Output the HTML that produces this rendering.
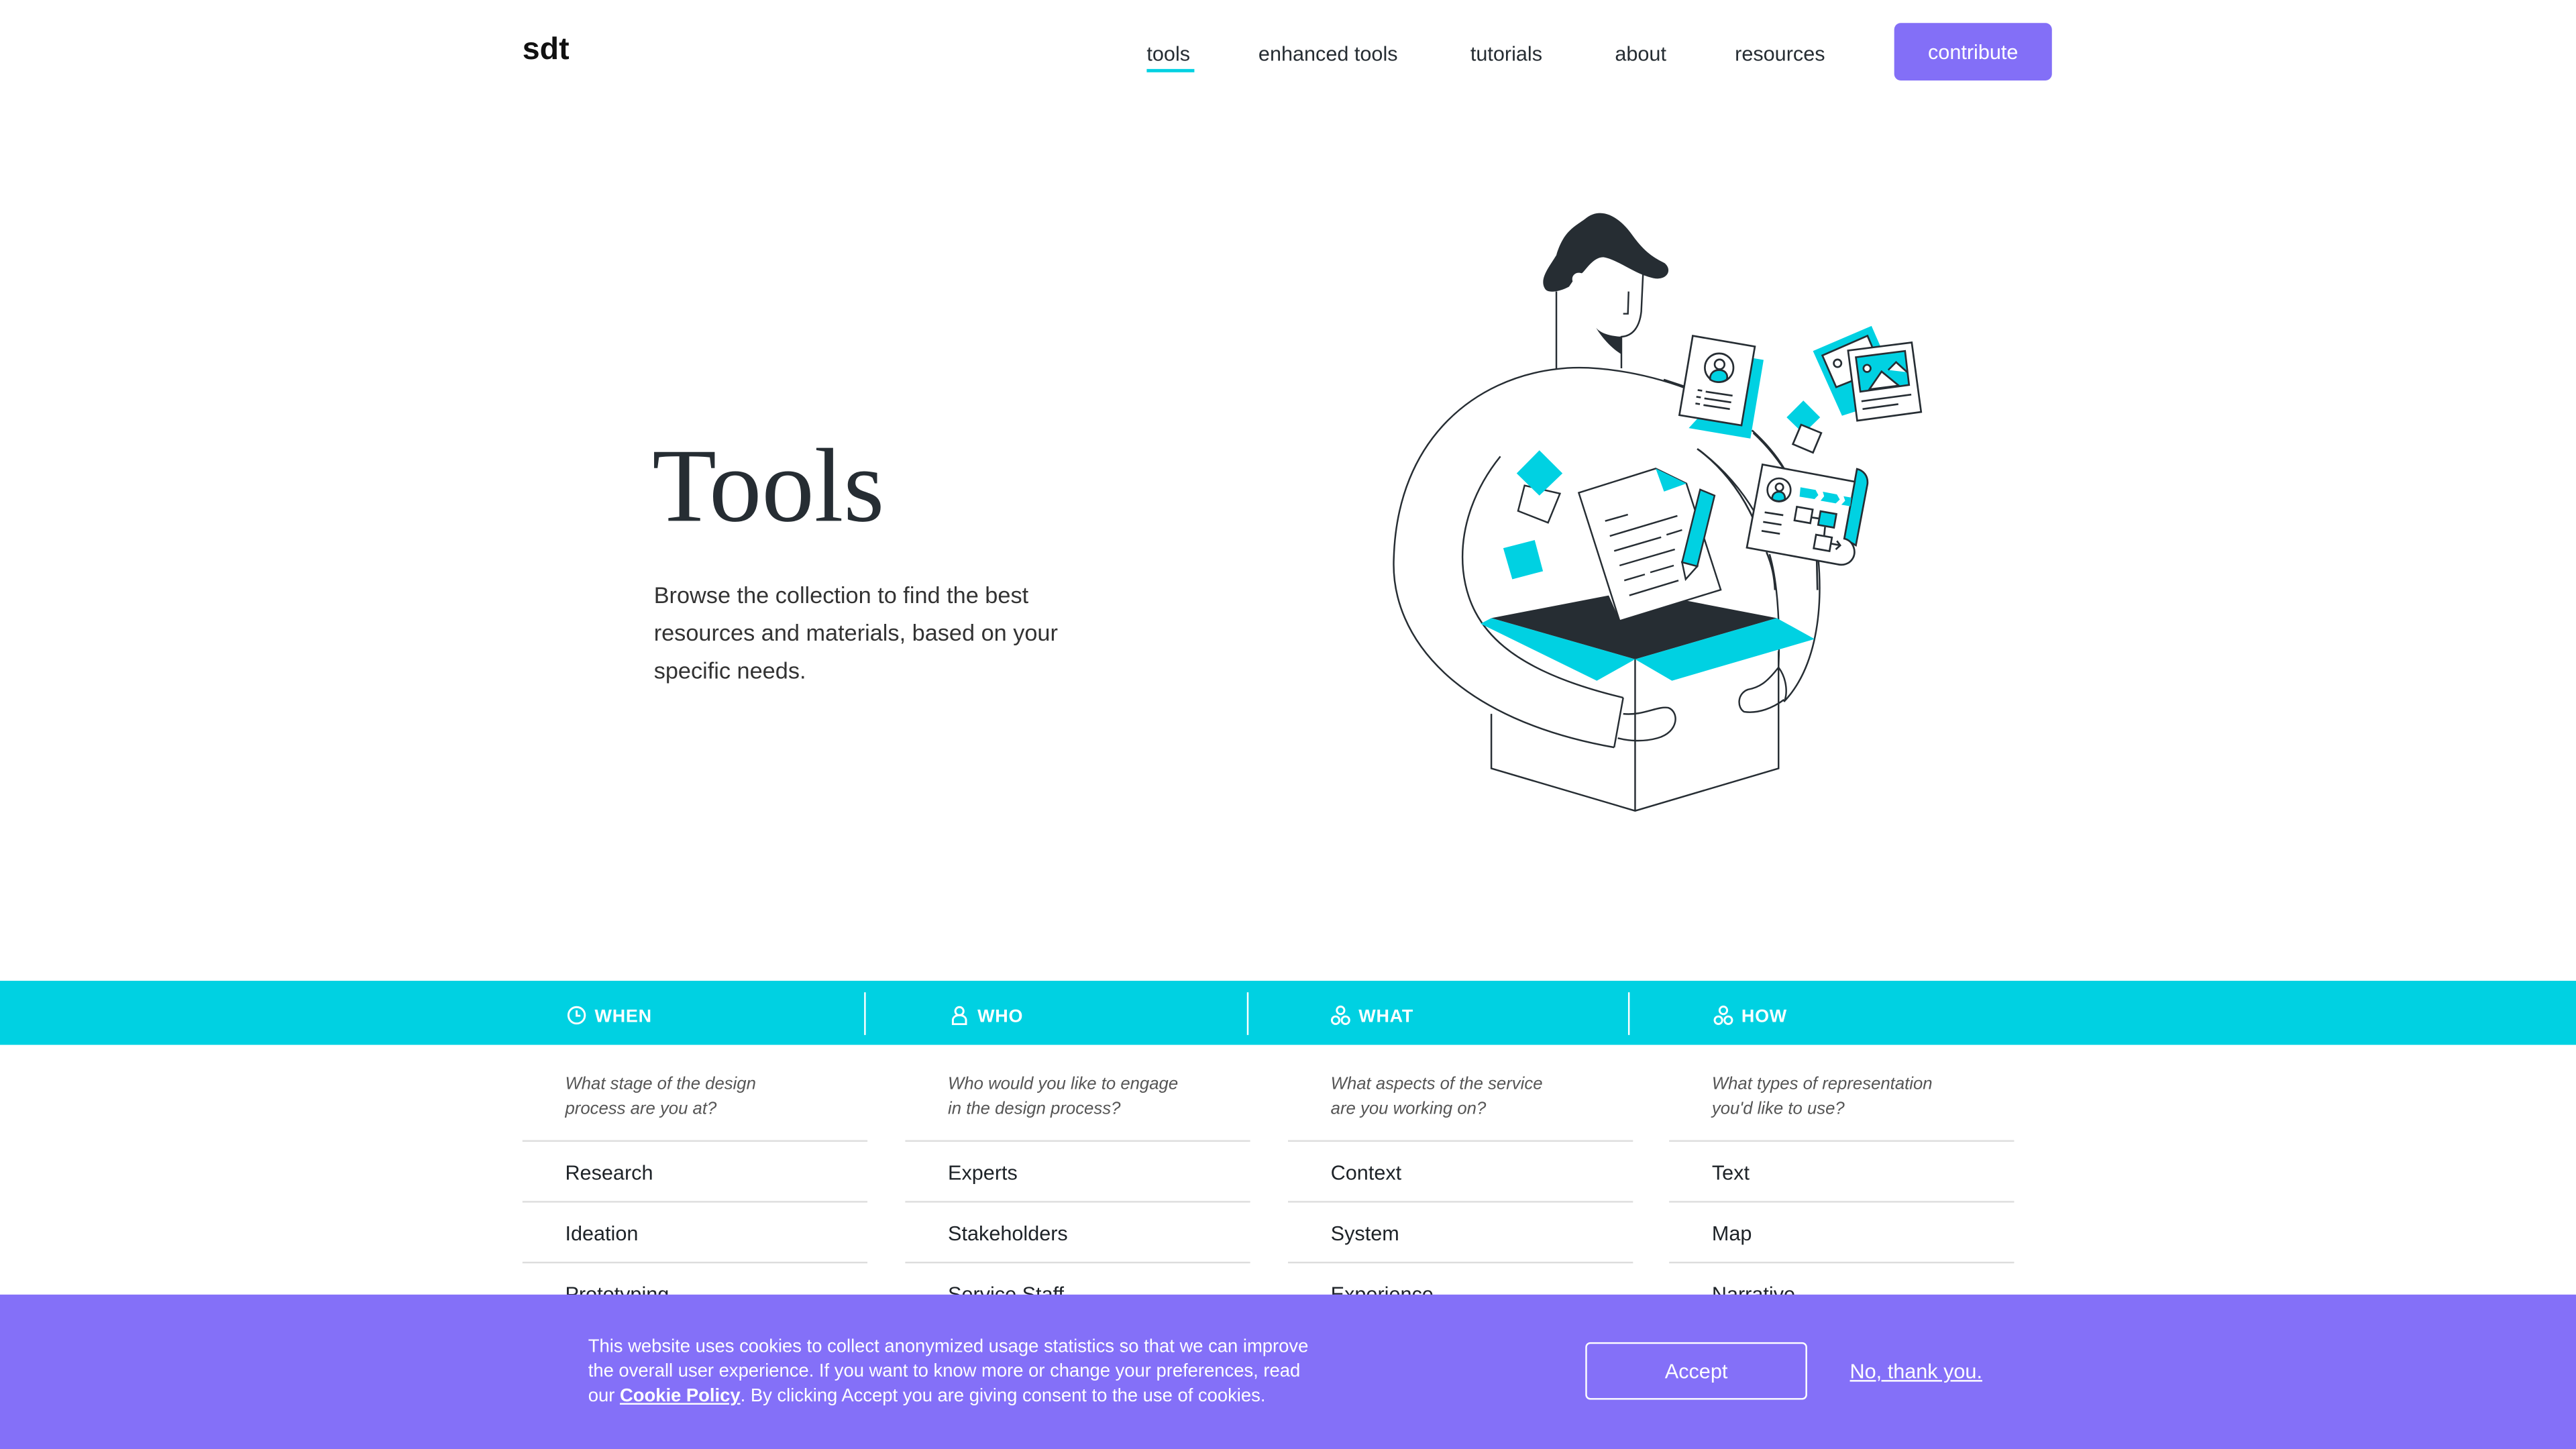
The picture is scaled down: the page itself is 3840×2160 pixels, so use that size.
<!DOCTYPE html>
<html><head><meta charset="utf-8">
<style>
html,body{margin:0;padding:0;width:3840px;height:2160px;overflow:hidden;background:#fff}
#w{position:absolute;left:0;top:0;width:1568px;height:882px;transform:scale(2.44898);transform-origin:0 0;font-family:"Liberation Sans",sans-serif;color:#262d33}
.a{position:absolute;white-space:nowrap}
.nav{font-size:12.5px;top:26px;color:#262d33}
.col{position:absolute;width:210px}
.q{font-style:italic;font-size:10.5px;color:#555;line-height:15px;position:absolute;top:653px;left:26px}
.it{position:absolute;left:0;width:210px;height:37px;border-top:1px solid #ddd;font-size:12.5px;color:#1e2328}
.it span{position:absolute;left:26px;top:12px}
.hd{position:absolute;top:612px;font-size:11px;font-weight:bold;color:#fff;letter-spacing:.3px}
.hd svg{vertical-align:-2px;margin-right:5px}
</style></head><body><div id="w">
<div class="a" style="left:318px;top:20px;font-size:19px;font-weight:bold;color:#111">sdt</div>
<div class="a nav" style="left:698px">tools</div>
<div class="a" style="left:698px;top:42px;width:29px;height:2px;background:#00d1e2"></div>
<div class="a nav" style="left:766px">enhanced tools</div>
<div class="a nav" style="left:895px">tutorials</div>
<div class="a nav" style="left:983px">about</div>
<div class="a nav" style="left:1056px">resources</div>
<div class="a" style="left:1153px;top:14px;width:96px;height:35px;background:#836ff7;border-radius:4px;color:#fff;font-size:12.5px;text-align:center;line-height:36px">contribute</div>

<div class="a" style="left:397px;top:259px;font-family:'Liberation Serif',serif;font-size:64px;color:#262d33">Tools</div>
<div class="a" style="left:398px;top:351px;font-size:14px;line-height:23px;color:#333;white-space:normal;width:270px">Browse the collection to find the best resources and materials, based on your specific needs.</div>

<svg class="a" style="left:0;top:0" width="1568" height="882" viewBox="0 0 1568 882">
<g transform="translate(833,118.4) scale(0.2199,0.246)" stroke="#262d33" stroke-width="1" fill="none">
<path vector-effect="non-scaling-stroke" d="M880 480 C760 440 620 420 520 432 C300 455 80 600 70 900 C60 1100 250 1300 680 1368"/>
<path vector-effect="non-scaling-stroke" d="M1065 590 C1150 660 1230 780 1245 900 C1260 1050 1230 1180 1150 1255"/>
<path vector-effect="non-scaling-stroke" d="M915 632 C1000 690 1060 760 1100 840 M1110 890 C1130 950 1140 1050 1135 1170"/>
<path vector-effect="non-scaling-stroke" d="M340 1285 L340 1420 L738 1525 L1135 1420 L1135 1130 M738 1150 L738 1525"/>
<path vector-effect="non-scaling-stroke" fill="#fff" d="M705 1245 C400 1180 280 1080 262 930 C250 820 300 720 365 648"/>
<path vector-effect="non-scaling-stroke" d="M705 1245 L680 1368"/>
<path vector-effect="non-scaling-stroke" d="M705 1285 C760 1290 800 1265 830 1270 C860 1280 860 1330 800 1345 C760 1355 720 1352 690 1345"/>
<path vector-effect="non-scaling-stroke" d="M1135 1170 C1160 1200 1160 1240 1150 1255 M1135 1170 C1100 1210 1080 1220 1050 1225 C1020 1235 1020 1270 1040 1280 C1080 1285 1120 1270 1150 1250"/>
<path vector-effect="non-scaling-stroke" d="M520 240 L520 432 M760 195 L755 290 C750 330 730 350 700 352 L700 430 M720 240 L718 295 L705 295"/>
<path fill="#262d33" stroke="none" d="M490 235 C470 210 500 180 520 150 C540 90 570 80 600 60 C640 30 690 50 730 100 C770 150 800 160 820 170 C840 185 830 210 795 208 C740 200 690 160 650 155 C620 155 600 190 590 195 C575 190 560 200 565 215 L555 228 C530 240 500 245 490 235 Z"/>
<path fill="#262d33" stroke="none" d="M630 330 C650 360 680 385 700 395 L700 352 C670 350 645 345 630 330 Z"/>
<polygon fill="#262d33" stroke="none" points="340,1048 665,992 695,1053 880,1005 1130,1048 738,1150"/>
<polygon fill="#00d1e2" stroke="none" points="310,1062 340,1048 738,1150 632,1203"/>
<polygon fill="#00d1e2" stroke="none" points="738,1150 1130,1048 1235,1100 840,1203"/>
<polygon vector-effect="non-scaling-stroke" fill="#fff" points="582,738 795,678 880,715 975,978 695,1055"/>
<polygon fill="#00d1e2" stroke="none" points="795,678 880,715 818,735"/>
<path vector-effect="non-scaling-stroke" d="M655 808 L718 792 M668 845 L855 795 M680 882 L810 848 M825 842 L868 830 M695 918 L848 878 M708 955 L765 940 M780 935 L845 918 M722 992 L858 955"/>
<polygon fill="#00d1e2" vector-effect="non-scaling-stroke" points="918,730 958,745 910,920 868,910"/>
<polygon fill="#fff" vector-effect="non-scaling-stroke" points="868,910 910,920 878,952"/>
<polygon fill="#fff" vector-effect="non-scaling-stroke" points="432,720 530,740 497,812 414,783"/>
<polygon fill="#00d1e2" stroke="none" points="473,633 537,690 473,745 410,690"/>
<polygon fill="#00d1e2" stroke="none" points="373,875 460,855 483,932 398,952"/>
</g>
<g transform="translate(1012.7,187.8) scale(0.136)" fill="none" stroke="#262d33" stroke-width="8">
<polygon fill="#00d1e2" stroke="none" points="400,222 447,230 388,582 112,535"/>
<polygon fill="#fff" points="130,122 408,170 348,523 70,477"/>
<circle cx="248" cy="265" r="64" fill="#fff"/>
<path fill="#00d1e2" d="M208 318 C205 290 225 275 248 275 C275 275 290 295 282 318 C260 333 230 333 208 318Z"/>
<circle cx="250" cy="250" r="22" fill="#fff"/>
<path d="M152 365 L172 368 M188 372 L308 390 M146 395 L166 398 M182 402 L302 420 M142 425 L162 428 M178 432 L296 450"/>
<polygon fill="#00d1e2" stroke="none" points="668,190 930,78 968,165 860,460 798,480"/>
<polygon fill="#fff" points="710,210 912,122 940,188 840,325 772,352"/>
<circle cx="778" cy="245" r="17"/>
<polygon fill="#fff" points="825,188 1110,152 1152,463 866,502"/>
<polygon fill="#00d1e2" points="860,218 1080,190 1098,342 880,372"/>
<circle cx="910" cy="268" r="16" fill="#fff"/>
<path fill="#fff" d="M920 362 L975 282 L1052 345 Z M1005 275 L1040 240 L1090 285"/>
<path d="M885 415 L1108 385 M890 450 L1050 428"/>
<polygon fill="#00d1e2" stroke="none" points="625,412 700,487 625,560 550,487"/>
<polygon fill="#fff" points="615,520 705,557 668,645 578,607"/>
<path d="M0 318 L90 348 M150 628 C250 700 340 810 398 935 M395 545 C450 595 500 650 538 715 M460 1090 C485 1150 495 1200 498 1260 M685 1130 L688 1260"/>
<path fill="#00d1e2" d="M865 718 C895 725 915 750 912 785 L860 1060 L808 1030 Z"/>
<path fill="#fff" d="M442 698 L855 775 L808 1030 C850 1040 865 1090 845 1120 C830 1145 800 1150 780 1145 L372 1070 Z"/>
<circle cx="516" cy="812" r="52" fill="#fff"/>
<path fill="#00d1e2" d="M485 852 C485 830 500 820 516 820 C535 820 545 835 542 855 C525 865 500 865 485 852Z"/>
<circle cx="518" cy="800" r="17" fill="#fff"/>
<path fill="#00d1e2" stroke="none" d="M612 800 L680 812 L692 835 L675 853 L608 842Z M712 820 L775 832 L788 855 L770 872 L702 860 L718 840Z M805 840 L840 846 L835 885 L795 878 L812 860Z"/>
<rect x="590" y="893" width="72" height="62" transform="rotate(10 626 924)" fill="#fff"/>
<rect x="696" y="913" width="72" height="62" transform="rotate(10 732 944)" fill="#00d1e2"/>
<rect x="676" y="1018" width="72" height="62" transform="rotate(10 712 1049)" fill="#fff"/>
<path d="M662 935 L696 940 M722 978 L718 1018 M748 1052 L790 1060 M775 1040 L790 1060 L770 1078 M452 912 L535 925 M445 955 L527 968 M438 995 L520 1008"/>
</g>
</svg>

<div class="a" style="left:0;top:597px;width:1568px;height:39px;background:#00d1e2"></div>
<div class="a" style="left:526px;top:604px;width:1px;height:26px;background:#fff"></div>
<div class="a" style="left:759px;top:604px;width:1px;height:26px;background:#fff"></div>
<div class="a" style="left:991px;top:604px;width:1px;height:26px;background:#fff"></div>
<div class="hd" style="left:345px"><svg width="12" height="12" viewBox="0 0 12 12" fill="none" stroke="#fff" stroke-width="1.2"><circle cx="6" cy="6" r="5"/><path d="M6 3v3.3h2.3"/></svg>WHEN</div>
<div class="hd" style="left:578px"><svg width="12" height="12" viewBox="0 0 12 12" fill="none" stroke="#fff" stroke-width="1.2"><circle cx="6" cy="3.5" r="2.5"/><path d="M2 11.4v-2.5a4 3 0 0 1 8 0v2.5z"/></svg>WHO</div>
<div class="hd" style="left:810px"><svg width="12" height="12" viewBox="0 0 12 12" fill="none" stroke="#fff" stroke-width="1.2"><circle cx="6" cy="3" r="2.3"/><circle cx="3" cy="9" r="2.3"/><circle cx="9" cy="9" r="2.3"/></svg>WHAT</div>
<div class="hd" style="left:1043px"><svg width="12" height="12" viewBox="0 0 12 12" fill="none" stroke="#fff" stroke-width="1.2"><circle cx="6" cy="3" r="2.3"/><circle cx="3" cy="9" r="2.3"/><circle cx="9" cy="9" r="2.3"/></svg>HOW</div>

<div class="col" style="left:318px;top:0">
<div class="q">What stage of the design<br>process are you at?</div>
<div class="it" style="top:694px"><span>Research</span></div>
<div class="it" style="top:731px"><span>Ideation</span></div>
<div class="it" style="top:768px"><span>Prototyping</span></div>
</div>
<div class="col" style="left:551px;top:0">
<div class="q">Who would you like to engage<br>in the design process?</div>
<div class="it" style="top:694px"><span>Experts</span></div>
<div class="it" style="top:731px"><span>Stakeholders</span></div>
<div class="it" style="top:768px"><span>Service Staff</span></div>
</div>
<div class="col" style="left:784px;top:0">
<div class="q">What aspects of the service<br>are you working on?</div>
<div class="it" style="top:694px"><span>Context</span></div>
<div class="it" style="top:731px"><span>System</span></div>
<div class="it" style="top:768px"><span>Experience</span></div>
</div>
<div class="col" style="left:1016px;top:0">
<div class="q">What types of representation<br>you'd like to use?</div>
<div class="it" style="top:694px"><span>Text</span></div>
<div class="it" style="top:731px"><span>Map</span></div>
<div class="it" style="top:768px"><span>Narrative</span></div>
</div>

<div class="a" style="left:0;top:788px;width:1568px;height:94px;background:#8470f8"></div>
<div class="a" style="left:358px;top:813px;font-size:11.2px;line-height:15px;color:#fff">This website uses cookies to collect anonymized usage statistics so that we can improve<br>the overall user experience. If you want to know more or change your preferences, read<br>our <b style="text-decoration:underline">Cookie Policy</b>. By clicking Accept you are giving consent to the use of cookies.</div>
<div class="a" style="left:965px;top:817px;width:133px;height:33px;border:1px solid #fff;border-radius:3px;color:#fff;font-size:12.5px;text-align:center;line-height:35px">Accept</div>
<div class="a" style="left:1126px;top:828px;font-size:12.5px;color:#fff;text-decoration:underline">No, thank you.</div>
</div></body></html>
